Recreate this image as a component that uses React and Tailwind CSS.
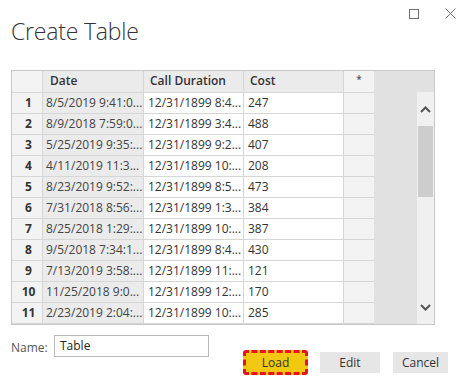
import React from "react";

const rows = [
  ["1", "8/5/2019 9:41:0...", "12/31/1899 8:4...", "247"],
  ["2", "8/9/2018 7:59:0...", "12/31/1899 3:4...", "488"],
  ["3", "5/25/2019 9:35:...", "12/31/1899 9:2...", "407"],
  ["4", "4/11/2019 11:3...", "12/31/1899 10:...", "208"],
  ["5", "8/23/2019 9:52:...", "12/31/1899 8:5...", "473"],
  ["6", "7/31/2018 8:56:...", "12/31/1899 1:3...", "384"],
  ["7", "8/25/2018 1:29:...", "12/31/1899 10:...", "387"],
  ["8", "9/5/2018 7:34:1...", "12/31/1899 8:4...", "430"],
  ["9", "7/13/2019 3:58:...", "12/31/1899 11:...", "121"],
  ["10", "11/25/2018 9:0...", "12/31/1899 12:...", "170"],
  ["11", "2/23/2019 2:04:...", "12/31/1899 10:...", "285"],
  ["", "", "", ""],
];

const font = { fontFamily: '"Open Sans", "Noto Sans", sans-serif' };

export default function App() {
  return (
    <div
      className="w-[457px] h-[386px] bg-white relative overflow-hidden text-[#333]"
      style={font}
    >
      {/* window controls */}
      <div className="absolute top-[8px] left-[409px] flex items-center gap-[26px]">
        <svg width="10" height="10" viewBox="0 0 10 10">
          <rect x="0.5" y="0.5" width="9" height="9" fill="none" stroke="#707070" strokeWidth="1" />
        </svg>
        <svg width="11" height="11" viewBox="0 0 11 11">
          <path d="M0.5 0.5 L10.5 10.5 M10.5 0.5 L0.5 10.5" stroke="#707070" strokeWidth="1" />
        </svg>
      </div>

      <div className="pl-[11px] pt-[16px]">
        <h1 className="text-[23px] font-light leading-[31px] text-[#333] tracking-[-0.2px]">
          Create Table
        </h1>
      </div>

      {/* table */}
      <div className="ml-[11px] mt-[23px] w-[424px] h-[255px] border border-[#c8c8c8] flex overflow-hidden">
        <div className="flex flex-col w-[362px] shrink-0">
          <div className="flex h-[22px] shrink-0 text-[12px] font-semibold text-[#333] leading-[20px]">
            <div className="w-[31px] bg-[#f3f3f3] border-r border-b border-[#d6d6d6]"></div>
            <div className="w-[101px] bg-[#ebebeb] border-r border-b border-[#d6d6d6] pl-[7px]">Date</div>
            <div className="w-[100px] bg-[#ebebeb] border-r border-b border-[#d6d6d6] pl-[6px]">Call Duration</div>
            <div className="w-[100px] bg-[#ebebeb] border-r border-b border-[#d6d6d6] pl-[6px]">Cost</div>
            <div className="w-[30px] bg-[#f3f3f3] border-b border-[#d6d6d6] text-center text-[#555] text-[10px] leading-[16px]">*</div>
          </div>
          {rows.map((r, i) => (
            <div key={i} className="flex h-[21px] shrink-0 text-[12px] leading-[20px]">
              <div className="w-[31px] bg-[#f3f3f3] border-r border-b border-[#d6d6d6] text-center font-bold pl-[3px] text-[#333]">
                {r[0]}
              </div>
              <div className="w-[101px] bg-[#ebebeb] border-r border-b border-[#d6d6d6] pl-[3px] whitespace-nowrap overflow-hidden text-[#444]">
                {r[1]}
              </div>
              <div className="w-[100px] bg-white border-r border-b border-[#d6d6d6] pl-[4px] whitespace-nowrap overflow-hidden text-[#333]">
                {r[2]}
              </div>
              <div className="w-[100px] bg-white border-r border-b border-[#d6d6d6] pl-[4px] whitespace-nowrap overflow-hidden text-[#333]">
                {r[3]}
              </div>
              <div className="w-[30px] bg-[#f3f3f3] border-b border-[#d6d6d6]"></div>
            </div>
          ))}
        </div>
        <div className="flex-1 bg-[#e1e1e1] flex justify-end">
          <div className="w-[17px] mt-[21px] bg-[#f0f0f0] flex flex-col items-center">
            <div className="h-[34px] w-full flex items-center justify-center">
              <svg width="11" height="7" viewBox="0 0 11 7">
                <path d="M1 6 L5.5 1.5 L10 6" fill="none" stroke="#555" strokeWidth="2" />
              </svg>
            </div>
            <div className="w-[15px] h-[71px] bg-[#cdcdcd]"></div>
            <div className="flex-1"></div>
            <div className="h-[34px] w-full flex items-center justify-center">
              <svg width="11" height="7" viewBox="0 0 11 7">
                <path d="M1 1 L5.5 5.5 L10 1" fill="none" stroke="#555" strokeWidth="2" />
              </svg>
            </div>
          </div>
        </div>
      </div>

      {/* bottom */}
      <div className="flex items-start mt-[10px] pl-[11px]">
        <span className="text-[12px] text-[#555] mt-[4px] w-[43px]">Name:</span>
        <div className="w-[155px] h-[22px] border border-[#b9b9b9] text-[12px] leading-[20px] pl-[5px] text-[#222]">
          Table
        </div>
        <div className="flex ml-[34px] mt-[14px]">
          <button className="w-[65px] h-[25px] bg-[#f2c811] border-[3px] border-dashed border-[#e81123] rounded-[3px] text-[12px] text-[#333] leading-none mt-[1px]">
            Load
          </button>
          <button className="ml-[12px] w-[60px] h-[21px] bg-[#e6e6e6] text-[12px] text-[#333] leading-none mt-[3px]">
            Edit
          </button>
          <button className="ml-[13px] w-[55px] h-[21px] bg-[#e6e6e6] text-[12px] text-[#333] leading-none mt-[3px]">
            Cancel
          </button>
        </div>
      </div>
    </div>
  );
}
